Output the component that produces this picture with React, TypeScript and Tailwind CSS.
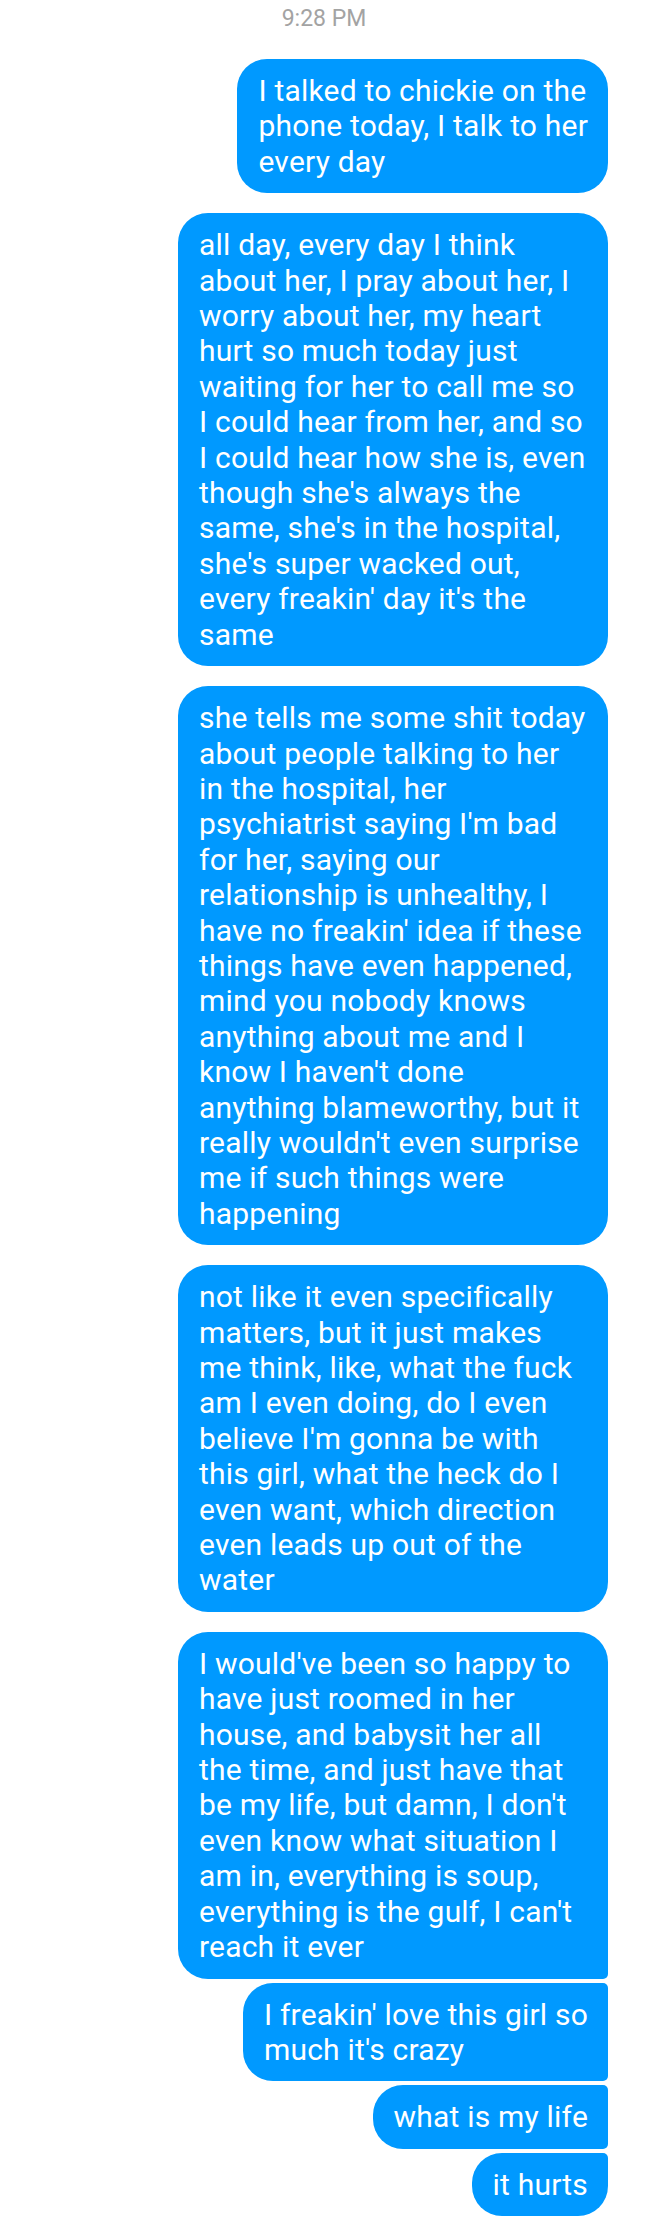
import React from 'react'

type Corner = 'solo' | 'first' | 'middle' | 'last'

interface Message {
  lines: string[]
  corner: Corner
  gapTop: 'group' | 'new'
  full?: boolean
}

const messages: Message[] = [
  {
    lines: ['I talked to chickie on the', 'phone today, I talk to her', 'every day'],
    corner: 'solo',
    gapTop: 'new',
  },
  {
    lines: [
      'all day, every day I think',
      'about her, I pray about her, I',
      'worry about her, my heart',
      'hurt so much today just',
      'waiting for her to call me so',
      'I could hear from her, and so',
      'I could hear how she is, even',
      "though she's always the",
      "same, she's in the hospital,",
      "she's super wacked out,",
      "every freakin' day it's the",
      'same',
    ],
    corner: 'solo',
    gapTop: 'new',
    full: true,
  },
  {
    lines: [
      'she tells me some shit today',
      'about people talking to her',
      'in the hospital, her',
      "psychiatrist saying I'm bad",
      'for her, saying our',
      'relationship is unhealthy, I',
      "have no freakin' idea if these",
      'things have even happened,',
      'mind you nobody knows',
      'anything about me and I',
      "know I haven't done",
      'anything blameworthy, but it',
      "really wouldn't even surprise",
      'me if such things were',
      'happening',
    ],
    corner: 'solo',
    gapTop: 'new',
    full: true,
  },
  {
    lines: [
      'not like it even specifically',
      'matters, but it just makes',
      'me think, like, what the fuck',
      'am I even doing, do I even',
      "believe I'm gonna be with",
      'this girl, what the heck do I',
      'even want, which direction',
      'even leads up out of the',
      'water',
    ],
    corner: 'solo',
    gapTop: 'new',
    full: true,
  },
  {
    lines: [
      "I would've been so happy to",
      'have just roomed in her',
      'house, and babysit her all',
      'the time, and just have that',
      "be my life, but damn, I don't",
      'even know what situation I',
      'am in, everything is soup,',
      "everything is the gulf, I can't",
      'reach it ever',
    ],
    corner: 'first',
    gapTop: 'new',
    full: true,
  },
  {
    lines: ["I freakin' love this girl so", "much it's crazy"],
    corner: 'middle',
    gapTop: 'group',
  },
  { lines: ['what is my life'], corner: 'middle', gapTop: 'group' },
  { lines: ['it hurts'], corner: 'last', gapTop: 'group' },
]

const cornerClass: Record<Corner, string> = {
  solo: 'rounded-[30px]',
  first: 'rounded-l-[30px] rounded-tr-[30px] rounded-br-[5px]',
  middle: 'rounded-l-[30px] rounded-r-[5px]',
  last: 'rounded-l-[30px] rounded-tr-[5px] rounded-br-[30px]',
}

function Bubble({ msg, first }: { msg: Message; first: boolean }) {
  const gap = first ? '' : msg.gapTop === 'new' ? 'mt-[20px]' : 'mt-[4px]'
  return (
    <div
      className={`${gap} ${cornerClass[msg.corner]} ${msg.full ? 'w-[430px]' : ''} bg-[#0099ff] pl-[21px] pr-[20px] pt-[14px] pb-[14px] text-[30px] leading-[35.4px] tracking-[0.2px] text-white whitespace-nowrap`}
    >
      {msg.lines.map((line, i) => (
        <React.Fragment key={i}>
          {i > 0 && <br />}
          {line}
        </React.Fragment>
      ))}
    </div>
  )
}

export default function App() {
  return (
    <div
      className="min-h-[2228px] w-[648px] bg-white"
      style={{ fontFamily: 'Roboto, "Noto Sans", sans-serif' }}
    >
      <div className="pt-[8px] pb-[29px] text-center text-[23px] leading-[22px] text-[#a3a3a3]">
        9:28 PM
      </div>
      <div className="flex flex-col items-end pr-[40px]">
        {messages.map((m, i) => (
          <Bubble key={i} msg={m} first={i === 0} />
        ))}
      </div>
    </div>
  )
}
